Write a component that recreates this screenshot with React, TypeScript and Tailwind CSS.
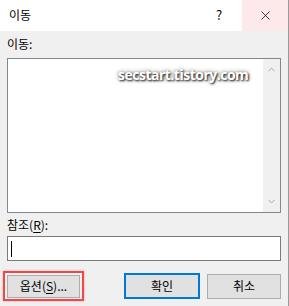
import { ChevronUp, ChevronDown, X } from "lucide-react";

const font = "font-['Malgun_Gothic','Noto_Sans_CJK_KR',sans-serif]";

export default function App() {
  return (
    <div className={`${font} flex h-[306px] w-[289px] flex-col border-r border-[#9a9a9a] bg-[#f0f0f0] text-[12px] text-black`}>
      {/* title bar */}
      <div className="flex h-[31px] shrink-0 items-stretch bg-white">
        <div className="flex flex-1 items-center pl-[9px] pb-[1px] text-[12px]">이동</div>
        <div className="flex w-[46px] items-center justify-center pb-[1px] text-[13px]">?</div>
        <div className="flex w-[46px] items-center justify-center bg-[#fde9e9]">
          <X size={15} strokeWidth={1.2} />
        </div>
      </div>

      <div className="flex flex-1 flex-col px-[7px]">
        <div className="mt-[4px] h-[23px] leading-[17px]">이동:</div>

        {/* list box */}
        <div className="relative flex h-[155px] border border-[#828790] bg-white">
          <div className="flex-1" />
          <div className="flex w-[17px] flex-col items-center justify-between bg-[#f0f0f0] py-[5px]">
            <ChevronUp size={11} strokeWidth={2} className="text-[#a3a3a3]" />
            <ChevronDown size={11} strokeWidth={2} className="text-[#a3a3a3]" />
          </div>
          <span className="absolute left-[110px] top-[5px] font-['Open_Sans',sans-serif] text-[14px] font-bold tracking-[-0.5px] text-white [text-shadow:1px_1px_2px_rgba(0,0,0,0.85),0_0_4px_rgba(0,0,0,0.6)]">
            secstart.tistory.com
          </span>
        </div>

        <div className="mt-[2px] h-[21px] pt-[1px] leading-[17px]">
          참조(<span className="underline underline-offset-2">R</span>):
        </div>

        {/* input */}
        <div className="flex h-[25px] items-center border border-[#7a7a7a] bg-white pl-[3px]">
          <div className="h-[16px] w-px bg-black" />
        </div>

        {/* buttons */}
        <div className="mt-[10px] flex items-center">
          <div className="-ml-[4px] flex h-[30px] w-[81px] items-center justify-center border-2 border-[#ea4a4a] shadow-[0_0_2px_rgba(234,74,74,0.5)]">
            <div className="flex h-[23px] w-[73px] items-center justify-center border border-[#adadad] bg-[#e1e1e1]">
              옵션(<span className="underline underline-offset-2">S</span>)...
            </div>
          </div>
          <div className="ml-[40px] flex h-[26px] w-[76px] items-center justify-center border-2 border-[#0078d7] bg-[#e1e1e1]">
            확인
          </div>
          <div className="ml-[7px] flex h-[25px] w-[74px] items-center justify-center border border-[#adadad] bg-[#e1e1e1]">
            취소
          </div>
        </div>
      </div>
    </div>
  );
}
